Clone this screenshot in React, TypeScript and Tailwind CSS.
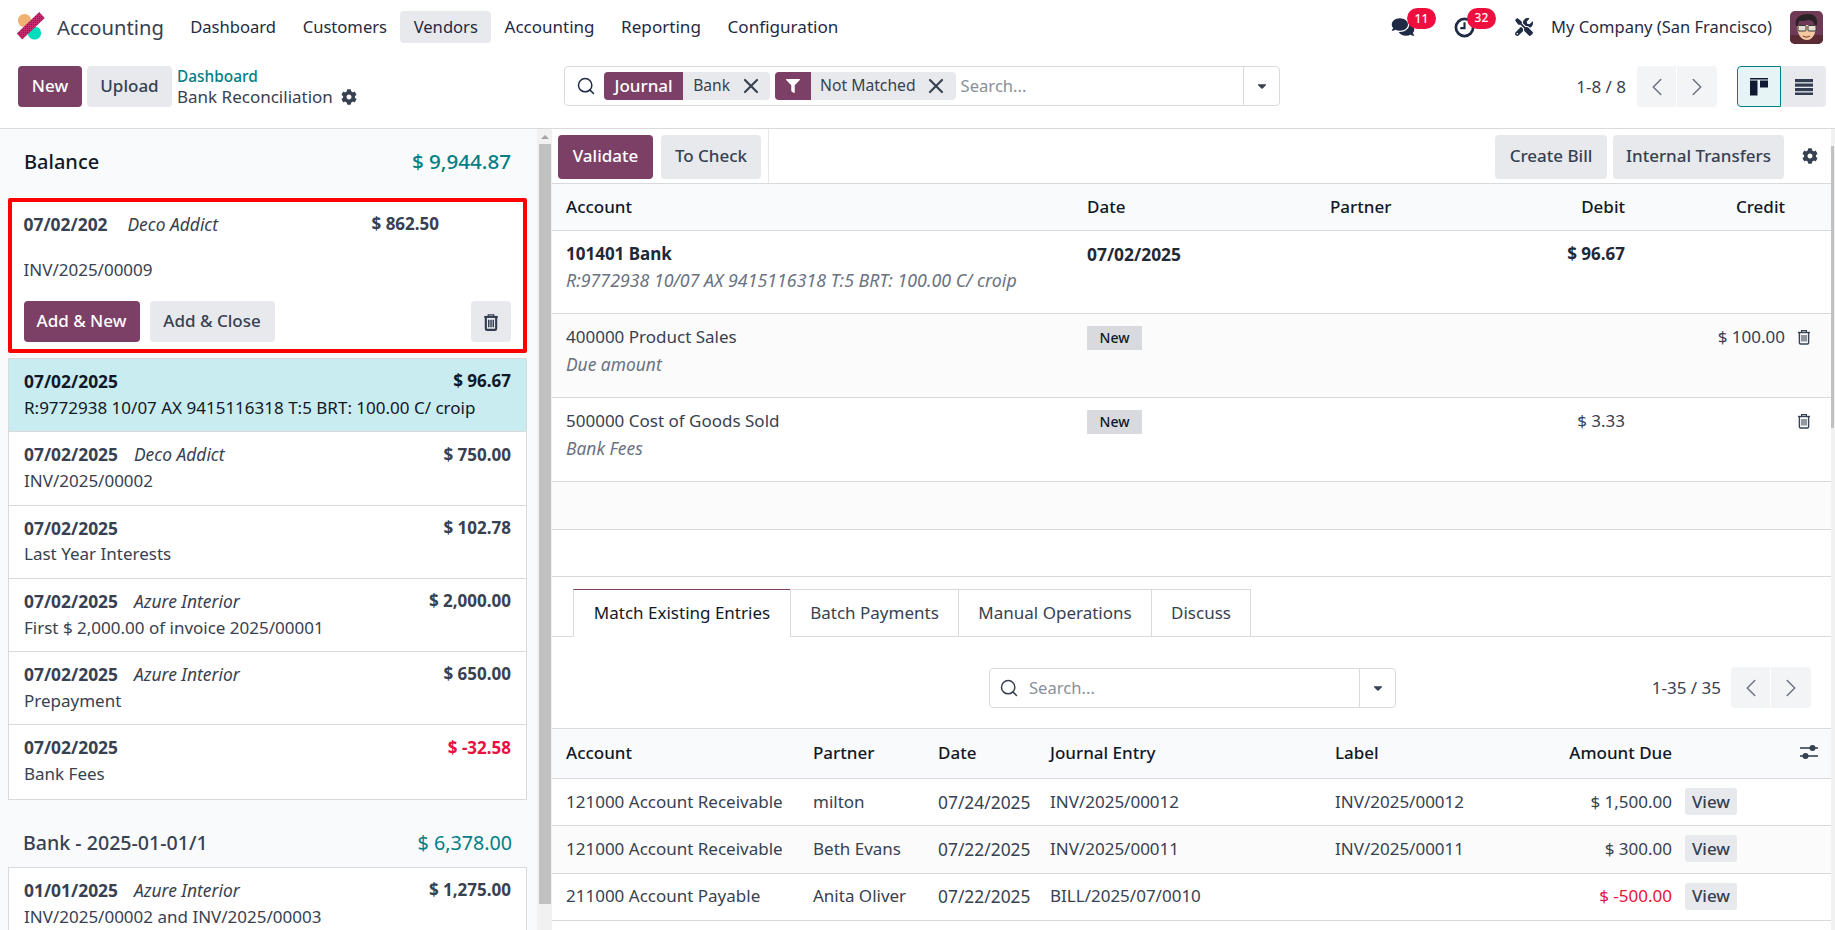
import React from "react";
import { Search, ChevronLeft, ChevronRight, X } from "lucide-react";
import { FaCog, FaFilter, FaCaretDown, FaComments, FaTools } from "react-icons/fa";

const Trash = ({ className = "", heavy = false }: { className?: string; heavy?: boolean }) => (
  <svg viewBox="0 0 14 16" className={className} fill="none" stroke="currentColor">
    <path d="M1 3.5h12" strokeWidth={heavy ? 1.8 : 1.4} />
    <path d="M4.6 3.3V1.6h4.8v1.7" strokeWidth="1.2" />
    <path d="M2.4 3.5v10.2c0 .8.5 1.3 1.2 1.3h6.8c.7 0 1.2-.5 1.2-1.3V3.5" strokeWidth={heavy ? 1.9 : 1.4} />
    <path d="M5 6v6.6M7 6v6.6M9 6v6.6" strokeWidth={heavy ? 1.3 : 1.1} />
  </svg>
);

const ClockIcon = () => (
  <svg viewBox="0 0 20 20" className="w-[21px] h-[21px]" fill="none" stroke="#1f2a44">
    <circle cx="10" cy="10" r="8.2" strokeWidth="2.6" />
    <path d="M10 5v5.6H6" strokeWidth="2" />
  </svg>
);

const Logo = () => (
  <svg viewBox="0 0 30 30" className="w-[30px] h-[30px]">
    <defs>
      <pattern id="dots" width="2" height="2" patternUnits="userSpaceOnUse">
        <rect width="2" height="2" fill="#c42a6c" />
        <rect width="1" height="1" fill="#6e2350" />
      </pattern>
    </defs>
    <circle cx="9.5" cy="8.5" r="6.6" fill="#f0b273" />
    <circle cx="19.500" cy="21" r="6.6" fill="#00dcbe" />
    <path d="M4.5 24.500 L27 3" stroke="url(#dots)" strokeWidth="8" strokeLinecap="butt" />
  </svg>
);

const Avatar = () => (
  <svg viewBox="0 0 33 33" className="w-[33px] h-[33px] rounded-[5px]">
    <rect width="33" height="33" fill="#6f3a55" />
    <path d="M0 33V24h33v9z" fill="#5a2b35" />
    <path d="M7 14c0 9 4 15 10 15s9-7 9-15z" fill="#f2c9a0" />
    <path d="M6 15C4 6 11 3 18 3c6 0 10 3 9 11l-2 1c-1-4-3-6-6-6-4 1-8 1-10 1l-1 5z" fill="#2a2226" />
    <rect x="8" y="14.5" width="8" height="5.5" rx="1" fill="#e8ddd2" stroke="#3a3a3a" strokeWidth="1" />
    <rect x="18" y="14.5" width="8" height="5.5" rx="1" fill="#e8ddd2" stroke="#3a3a3a" strokeWidth="1" />
    <path d="M13 25c2 1.200 5 1.200 7 0" stroke="#8a4a3a" strokeWidth="1.200" fill="none" />
  </svg>
);

const KanbanIcon = () => (
  <svg viewBox="0 0 20 20" className="w-[20px] h-[20px]">
    <rect x="1" y="1" width="18" height="1.5" fill="#111a33" />
    <rect x="1" y="3.500" width="7.500" height="15" fill="#111a33" />
    <rect x="11" y="3.500" width="8" height="7" fill="#111a33" />
  </svg>
);

const ListIcon = () => (
  <svg viewBox="0 0 20 20" className="w-[20px] h-[20px]">
    <rect x="1" y="2" width="18" height="3.200" fill="#333c50" />
    <rect x="1" y="6.500" width="18" height="3.200" fill="#333c50" />
    <rect x="1" y="11" width="18" height="3.200" fill="#333c50" />
    <rect x="1" y="15.500" width="18" height="2.500" fill="#333c50" />
  </svg>
);

const SlidersIcon = () => (
  <svg viewBox="0 0 18 16" className="w-[18px] h-[16px]" fill="#374151">
    <rect x="0" y="3.200" width="18" height="1.600" />
    <circle cx="12.500" cy="4" r="3" />
    <rect x="0" y="11.200" width="18" height="1.600" />
    <circle cx="5.500" cy="12" r="3" />
  </svg>
);

type Line = { date: string; partner?: string; amount: string; text: string; red?: boolean; active?: boolean };

const lines: Line[] = [
  { date: "07/02/2025", amount: "$ 96.67", text: "R:9772938 10/07 AX 9415116318 T:5 BRT: 100.00 C/ croip", active: true },
  { date: "07/02/2025", partner: "Deco Addict", amount: "$ 750.00", text: "INV/2025/00002" },
  { date: "07/02/2025", amount: "$ 102.78", text: "Last Year Interests" },
  { date: "07/02/2025", partner: "Azure Interior", amount: "$ 2,000.00", text: "First $ 2,000.00 of invoice 2025/00001" },
  { date: "07/02/2025", partner: "Azure Interior", amount: "$ 650.00", text: "Prepayment" },
  { date: "07/02/2025", amount: "$ -32.58", text: "Bank Fees", red: true },
];

function StatementRow({ l }: { l: Line }) {
  return (
    <div className={`h-[73.3px] px-[15px] pt-[8.5px] border-b last:border-b-0 border-[#d8dadd] ${l.active ? "bg-[#c9ecf0] text-[#111827]" : "bg-white"}`}>
      <div className="flex items-center h-[27px]">
        <span className="font-bold w-[95px] text-[17.4px] whitespace-nowrap">{l.date}</span>
        {l.partner && <span className="italic ml-[15px] text-[17.4px]">{l.partner}</span>}
        <span className={`ml-auto font-bold ${l.red ? "text-[#e8103f]" : ""}`}>{l.amount}</span>
      </div>
      <div className="h-[26px] flex items-center whitespace-nowrap">{l.text}</div>
    </div>
  );
}

const navItems = [
  { n: "Dashboard", c: "text-[16.6px]" },
  { n: "Customers", c: "text-[16.6px]" },
  { n: "Vendors", c: "text-[16.6px] bg-[#e7e9ed]" },
  { n: "Accounting", c: "text-[17px]" },
  { n: "Reporting", c: "text-[17.1px]" },
  { n: "Configuration", c: "text-[17.1px]" },
];

function Navbar() {
  return (
    <div className="h-[55px] pb-[1px] flex items-center shrink-0 text-[#1f2a44] text-[16.6px]">
      <div className="flex items-center ml-[15px]">
        <Logo />
      </div>
      <span className="ml-[12px] text-[20.2px] text-[#374151]">Accounting</span>
      <nav className="flex ml-[13px]">
        {navItems.map((i) => (
          <span key={i.n} className={`h-[32px] px-[13.3px] flex items-center rounded-[4px] ${i.c}`}>{i.n}</span>
        ))}
      </nav>
      <div className="ml-auto flex items-center">
        <div className="relative w-[22px] h-[20px] mr-[41px]">
          <FaComments className="w-[24px] h-[20px] text-[#1f2a44]" />
          <span className="absolute left-[16px] top-[-9px] w-[29px] h-[21px] rounded-full bg-[#ee0f3f] text-white text-[12px] font-medium flex items-center justify-center">11</span>
        </div>
        <div className="relative w-[21px] h-[21px] mr-[40px]">
          <ClockIcon />
          <span className="absolute left-[13px] top-[-9px] w-[29px] h-[21px] rounded-full bg-[#ee0f3f] text-white text-[12px] font-medium flex items-center justify-center">32</span>
        </div>
        <FaTools className="w-[18px] h-[18px] mr-[18px]" />
        <span className="text-[16.5px]">My Company (San Francisco)</span>
        <span className="ml-[18px] mr-[12px]"><Avatar /></span>
      </div>
    </div>
  );
}

function ControlPanel() {
  return (
    <div className="h-[74px] flex items-start pt-[11px] border-b border-[#d8dadd] shrink-0">
      <div className="flex w-[564px] pl-[18px]">
        <button className="w-[64px] h-[41px] pb-[2px] rounded-[4px] bg-[#7c3f66] text-white font-medium">New</button>
        <button className="w-[85px] h-[41px] pb-[2px] rounded-[4px] bg-[#e7e9ed] font-medium ml-[5px]">Upload</button>
        <div className="ml-[5px] flex flex-col leading-[21px]">
          <span className="text-[#017e84] font-medium text-[15.4px]">Dashboard</span>
          <span className="flex items-center -mt-[1px]">Bank Reconciliation <FaCog className="ml-[8px] w-[16px] h-[16px]" /></span>
        </div>
      </div>
      <div className="w-[716px] h-[40px] border border-[#d8dadd] rounded-[4px] flex items-center">
        <Search className="w-[20px] h-[20px] ml-[11px] mr-[8px] text-[#1f2a44]" strokeWidth={1.8} />
        <span className="flex h-[28px] rounded-[4px] bg-[#e7e9ed] overflow-hidden items-center">
          <span className="h-full px-[10.5px] bg-[#7c3f66] text-white font-medium flex items-center">Journal</span>
          <span className="px-[10px] text-[15.6px]">Bank</span>
          <X className="w-[24px] h-[24px] ml-[-1px] mr-[7px]" strokeWidth={2.2} />
        </span>
        <span className="flex h-[28px] rounded-[4px] bg-[#e7e9ed] overflow-hidden items-center ml-[5px]">
          <span className="h-full w-[36px] bg-[#7c3f66] text-white flex items-center justify-center"><FaFilter className="w-[14px] h-[14px]" /></span>
          <span className="px-[9px] text-[15.7px]">Not Matched</span>
          <X className="w-[24px] h-[24px] ml-[-1px] mr-[8px]" strokeWidth={2.2} />
        </span>
        <span className="ml-[5px] text-[#8a9099] text-[16.6px]">Search...</span>
        <span className="ml-auto w-[36px] h-full border-l border-[#d8dadd] flex items-center justify-center">
          <FaCaretDown className="w-[14px] h-[14px]" />
        </span>
      </div>
      <div className="ml-auto flex items-center h-[41px] pr-[9px]">
        <span>1-8 / 8</span>
        <div className="ml-[11px] flex w-[80px] h-full rounded-[4px] bg-[#f3f4f6] text-[#6b7280]">
          <span className="w-1/2 flex items-center justify-center border-r-[1.500px] border-white"><ChevronLeft className="w-[30px] h-[30px]" strokeWidth={1.2} /></span>
          <span className="w-1/2 flex items-center justify-center"><ChevronRight className="w-[30px] h-[30px]" strokeWidth={1.2} /></span>
        </div>
        <div className="ml-[20px] flex h-full">
          <span className="w-[44px] flex items-center justify-center rounded-l-[4px] border border-[#017e84] bg-[#e6f4f5]"><KanbanIcon /></span>
          <span className="w-[45px] flex items-center justify-center rounded-r-[4px] bg-[#e7e9ed]"><ListIcon /></span>
        </div>
      </div>
    </div>
  );
}

function LeftPanel() {
  return (
    <div className="w-[552px] shrink-0 flex bg-[#f9fafb] overflow-hidden">
      <div className="w-[537px] shrink-0 pl-[8px] pr-[10px]">
        <div className="flex justify-between items-center h-[69px] pb-[4px] px-[16px]">
          <span className="text-[20px] font-medium text-[#111827]">Balance</span>
          <span className="text-[20.6px] font-medium text-[#017e84]">$ 9,944.87</span>
        </div>
        <div className="h-[155px] border-[4px] border-[#ff0000] rounded-[2px] bg-white px-[12px] flex flex-col -ml-[0.500px]">
          <div className="flex items-center h-[44px]">
            <span className="font-bold w-[85px] whitespace-nowrap text-[17.4px]">07/02/202</span>
            <span className="italic ml-[19px] w-[244px] text-[17.4px]">Deco Addict</span>
            <span className="font-bold">$ 862.50</span>
          </div>
          <div className="h-[48px] flex items-center">INV/2025/00009</div>
          <div className="flex mt-[7px]">
            <button className="w-[116px] h-[41px] pb-[2px] rounded-[4px] bg-[#7c3f66] text-white font-medium">Add &amp; New</button>
            <button className="w-[125px] h-[41px] pb-[2px] rounded-[4px] bg-[#e7e9ed] font-medium ml-[10px]">Add &amp; Close</button>
            <button className="w-[40px] h-[41px] rounded-[4px] bg-[#e7e9ed] ml-auto flex items-center justify-center"><Trash heavy className="w-[16px] h-[18px] text-[#333c50]" /></button>
          </div>
        </div>
        <div className="mt-[5px] border border-[#d8dadd]">
          {lines.map((l, i) => <StatementRow key={i} l={l} />)}
        </div>
        <div className="flex justify-between items-center h-[67px] pt-[18px] px-[15px]">
          <span className="text-[19.6px] font-medium">Bank - 2025-01-01/1</span>
          <span className="text-[19.7px] text-[#017e84]">$ 6,378.00</span>
        </div>
        <div className="border border-[#d8dadd]">
          <StatementRow l={{ date: "01/01/2025", partner: "Azure Interior", amount: "$ 1,275.00", text: "INV/2025/00002 and INV/2025/00003" }} />
        </div>
      </div>
      <div className="w-[15px] shrink-0 bg-[#f1f1f1] flex flex-col items-center">
        <div className="h-[15px] flex items-center"><span className="w-0 h-0 border-x-[4px] border-x-transparent border-b-[4px] border-b-[#a3a3a3]" /></div>
        <div className="w-[12px] h-[760px] bg-[#c1c1c1]" />
      </div>
    </div>
  );
}

const th = "font-medium text-[#111827]";
const newBadge = "inline-flex items-center justify-center w-[55px] h-[24px] -mt-[1px] bg-[#d8dadd] text-[#111827] text-[14px] font-medium";

function RightTop() {
  return (
    <>
      <div className="h-[55px] border-b border-[#d8dadd] flex shrink-0">
        <div className="w-[217px] pl-[6px] pt-[6px] border-r border-[#e5e7eb] flex">
          <button className="w-[95px] h-[44px] pb-[3px] rounded-[4px] bg-[#7c3f66] text-white font-medium">Validate</button>
          <button className="w-[100px] h-[44px] pb-[3px] rounded-[4px] bg-[#e7e9ed] font-medium ml-[8px]">To Check</button>
        </div>
        <div className="ml-auto pt-[6px] flex">
          <button className="w-[112px] h-[44px] pb-[3px] rounded-[4px] bg-[#e7e9ed] font-medium">Create Bill</button>
          <button className="w-[171px] h-[44px] pb-[3px] rounded-[4px] bg-[#e7e9ed] font-medium ml-[6px]">Internal Transfers</button>
          <span className="w-[47px] flex items-center justify-center h-[44px] pb-[2px]"><FaCog className="w-[16px] h-[16px] ml-[5px]" /></span>
        </div>
      </div>
      <div className={`h-[47px] pb-[1px] flex items-center bg-[#f9fafb] border-b border-[#d8dadd] px-[14px] ${th}`}>
        <span className="w-[521px]">Account</span>
        <span className="w-[243px]">Date</span>
        <span className="w-[295px] flex justify-between"><span>Partner</span><span>Debit</span></span>
        <span className="w-[160px] text-right">Credit</span>
      </div>
      <div className="h-[83px] bg-white border-b border-[#d8dadd] px-[14px] pt-[10px] flex">
        <div className="w-[521px]">
          <div className="font-bold h-[26px] flex items-center text-[#1f2937]">101401 Bank</div>
          <div className="italic text-[#6b7280] h-[27px] flex items-center text-[17.8px] whitespace-nowrap">R:9772938 10/07 AX 9415116318 T:5 BRT: 100.00 C/ croip</div>
        </div>
        <div className="w-[243px] font-bold h-[26px] flex items-center text-[#1f2937] text-[17.4px]">07/02/2025</div>
        <div className="w-[295px] text-right font-bold h-[26px] flex items-center justify-end text-[#1f2937]">$ 96.67</div>
      </div>
      <div className="h-[84px] bg-[#fbfbfb] border-b border-[#d8dadd] px-[14px] pt-[10px] flex">
        <div className="w-[521px]">
          <div className="h-[26px] flex items-center">400000 Product Sales</div>
          <div className="italic text-[#6b7280] h-[28px] flex items-center text-[17.4px]">Due amount</div>
        </div>
        <div className="w-[243px]"><span className={newBadge}>New</span></div>
        <div className="w-[295px]" />
        <div className="w-[160px] h-[26px] flex items-center justify-end">$ 100.00</div>
        <Trash className="w-[14px] h-[16px] ml-[12px] mt-[5px] text-[#374151]" />
      </div>
      <div className="h-[84px] bg-white border-b border-[#d8dadd] px-[14px] pt-[10px] flex">
        <div className="w-[521px]">
          <div className="h-[26px] flex items-center">500000 Cost of Goods Sold</div>
          <div className="italic text-[#6b7280] h-[28px] flex items-center text-[17.4px]">Bank Fees</div>
        </div>
        <div className="w-[243px]"><span className={newBadge}>New</span></div>
        <div className="w-[295px] h-[26px] flex items-center justify-end">$ 3.33</div>
        <div className="w-[160px]" />
        <Trash className="w-[14px] h-[16px] ml-[12px] mt-[5px] text-[#374151]" />
      </div>
      <div className="h-[48px] bg-[#fbfbfb] border-b border-[#d8dadd]" />
      <div className="h-[47px] bg-white border-b border-[#d8dadd]" />
    </>
  );
}

const tabs = [
  { n: "Match Existing Entries", w: "w-[218px]" },
  { n: "Batch Payments", w: "w-[169px]" },
  { n: "Manual Operations", w: "w-[194px]" },
  { n: "Discuss", w: "w-[100px]" },
];

const rows = [
  ["121000 Account Receivable", "milton", "07/24/2025", "INV/2025/00012", "INV/2025/00012", "$ 1,500.00"],
  ["121000 Account Receivable", "Beth Evans", "07/22/2025", "INV/2025/00011", "INV/2025/00011", "$ 300.00"],
  ["211000 Account Payable", "Anita Oliver", "07/22/2025", "BILL/2025/07/0010", "", "$ -500.00"],
];

function RightBottom() {
  return (
    <>
      <div className="h-[60px] px-[21px] flex items-end border-b border-[#d8dadd] shrink-0">
        {tabs.map((t, i) => (
          <span key={t.n} className={`${t.w} h-[48px] -mb-[1px] flex items-center justify-center border border-[#d8dadd] -mr-[1px] ${i === 0 ? "border-t-[#7c3f66] border-b-white bg-white text-[#111827]" : ""}`}>{t.n}</span>
        ))}
      </div>
      <div className="h-[92px] relative flex items-center justify-end pr-[20px] border-b border-[#d8dadd] shrink-0">
        <div className="absolute left-[437px] top-[31px] w-[407px] h-[40px] border border-[#d8dadd] rounded-[4px] flex items-center">
          <Search className="w-[20px] h-[20px] ml-[9px] mr-[10px]" strokeWidth={1.8} />
          <span className="text-[#8a9099] text-[16.6px]">Search...</span>
          <span className="ml-auto w-[36px] h-full border-l border-[#d8dadd] flex items-center justify-center"><FaCaretDown className="w-[14px] h-[14px]" /></span>
        </div>
        <span className="mr-[10px] mt-[10px]">1-35 / 35</span>
        <div className="flex w-[80px] h-[41px] mt-[10px] rounded-[4px] bg-[#f3f4f6] text-[#6b7280]">
          <span className="w-1/2 flex items-center justify-center border-r-[1.500px] border-white"><ChevronLeft className="w-[30px] h-[30px]" strokeWidth={1.2} /></span>
          <span className="w-1/2 flex items-center justify-center"><ChevronRight className="w-[30px] h-[30px]" strokeWidth={1.2} /></span>
        </div>
      </div>
      <div className={`h-[50px] pb-[2px] bg-[#f9fafb] border-b border-[#d8dadd] flex items-center px-[14px] shrink-0 ${th}`}>
        <span className="w-[247px]">Account</span>
        <span className="w-[125px]">Partner</span>
        <span className="w-[112px]">Date</span>
        <span className="w-[285px]">Journal Entry</span>
        <span className="w-[337px] flex justify-between"><span>Label</span><span>Amount Due</span></span>
      </div>
      {rows.map((r, i) => (
        <div key={i} className={`h-[47.3px] pb-[1px] border-b border-[#d8dadd] flex items-center px-[14px] shrink-0 ${i === 1 ? "bg-[#fbfbfb]" : "bg-white"}`}>
          <span className="w-[247px] whitespace-nowrap">{r[0]}</span>
          <span className="w-[125px]">{r[1]}</span>
          <span className="w-[112px] text-[17.4px]">{r[2]}</span>
          <span className="w-[285px]">{r[3]}</span>
          <span className="w-[337px] flex justify-between"><span>{r[4]}</span><span className={i === 2 ? "text-[#e8103f]" : ""}>{r[5]}</span></span>
          <span className="ml-[13px] w-[52px] h-[27px] rounded-[3px] bg-[#e7e9ed] flex items-center justify-center font-medium">View</span>
        </div>
      ))}
    </>
  );
}

export default function App() {
  return (
    <div className="w-[1835px] h-[930px] overflow-hidden flex flex-col bg-white text-[#374151] text-[17px] font-['Noto_Sans',sans-serif]">
      <Navbar />
      <ControlPanel />
      <div className="flex flex-1 min-h-0">
        <LeftPanel />
        <div className="flex-1 flex min-w-0">
          <div className="flex-1 min-w-0 flex flex-col relative">
            <RightTop />
            <RightBottom />
            <span className="absolute right-[13px] top-[615px]"><SlidersIcon /></span>
          </div>
          <div className="w-[4px] bg-[#f1f1f1] shrink-0"><div className="w-[3px] h-[282px] mt-[17px] bg-[#c1c1c1]" /></div>
        </div>
      </div>
    </div>
  );
}
